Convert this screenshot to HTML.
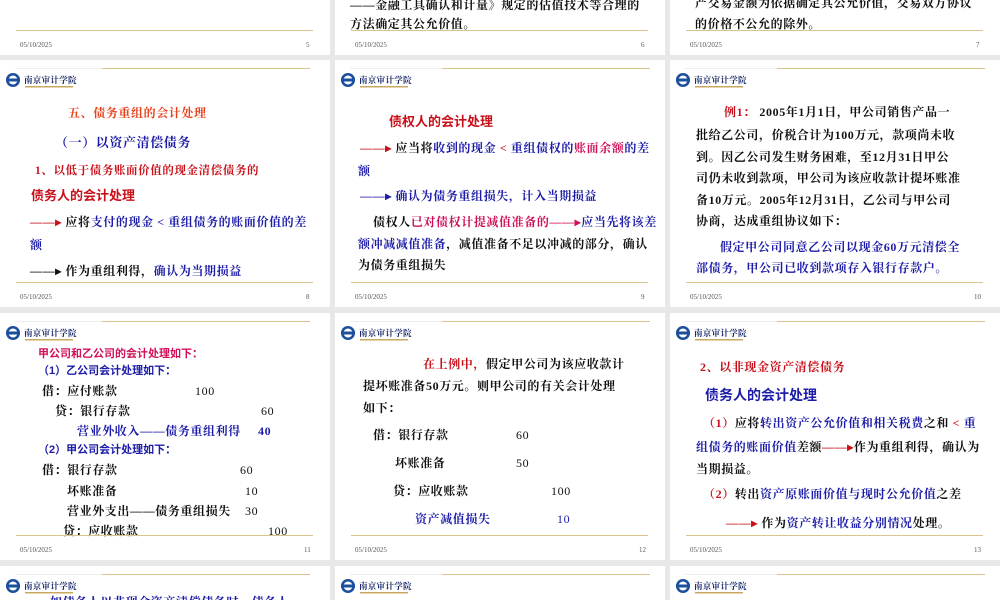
<!DOCTYPE html>
<html><head><meta charset="utf-8">
<style>
*{margin:0;padding:0;box-sizing:border-box}
html,body{width:1000px;height:600px;overflow:hidden;background:#e8e8e8;position:relative}
.s{position:absolute;background:#fff;width:330px;height:247px;overflow:hidden}
.t{position:absolute;white-space:nowrap;font-family:"Liberation Serif","Noto Serif CJK SC",serif;font-size:12px;font-weight:bold;color:#111;letter-spacing:0.6px;line-height:14px}
.h{font-family:"Liberation Sans","Noto Sans CJK SC",sans-serif;letter-spacing:0}
.gl{position:absolute;height:1px;background:#d8c48c}
.tl{position:absolute;height:1px;background:#eee}
.ft{position:absolute;font-family:"Liberation Serif",serif;font-size:7px;color:#555}
.r{color:#c8101a}.o{color:#e8401c}.b{color:#1c1ca8}.p{color:#d0105a}
.logo{position:absolute;left:5px;top:11px;width:75px;height:20px}
</style></head><body>

<!-- Row 1 -->
<div class="s" style="left:0;top:-192px">
<div class="gl" style="left:16px;top:222px;width:297px"></div>
<div class="ft" style="left:20px;top:233px">05/10/2025</div><div class="ft" style="left:306px;top:233px">5</div>
</div>
<div class="s" style="left:335px;top:-192px">
<div class="t" style="left:15px;top:190px">——金融工具确认和计量》规定的估值技术等合理的</div>
<div class="t" style="left:15px;top:209px">方法确定其公允价值。</div>
<div class="gl" style="left:16px;top:222px;width:297px"></div>
<div class="ft" style="left:20px;top:233px">05/10/2025</div><div class="ft" style="left:306px;top:233px">6</div>
</div>
<div class="s" style="left:670px;top:-192px">
<div class="t" style="left:25px;top:188px">产交易金额为依据确定其公允价值，交易双方协议</div>
<div class="t" style="left:25px;top:209px">的价格不公允的除外。</div>
<div class="gl" style="left:16px;top:222px;width:297px"></div>
<div class="ft" style="left:20px;top:233px">05/10/2025</div><div class="ft" style="left:306px;top:233px">7</div>
</div>

<!-- Row 2 -->
<div class="s" style="left:0;top:60px">
<div class="tl" style="left:15px;top:8px;width:88px"></div><div class="gl" style="left:102px;top:8px;width:208px"></div>
<svg class="logo" viewBox="0 0 75 20"><circle cx="8" cy="9" r="7" fill="#1c4f9c"/><circle cx="8" cy="9" r="4.5" fill="#fff"/><rect x="1" y="7.5" width="14" height="3" fill="#1c4f9c"/><text x="19" y="12" font-size="8.5" font-weight="bold" fill="#1a2a6a" font-family="Noto Serif CJK SC,serif" letter-spacing="0.3">南京审计学院</text><rect x="20" y="15" width="48" height="1.5" fill="#c8a860"/></svg>
<div class="t o" style="left:68px;top:46px">五、债务重组的会计处理</div>
<div class="t b" style="left:55px;top:76px;font-size:13px">（一）以资产清偿债务</div>
<div class="t r" style="left:35px;top:104px;font-size:11.5px">1、以低于债务账面价值的现金清偿债务的</div>
<div class="t h r" style="left:31px;top:129px;font-size:13px">债务人的会计处理</div>
<div class="t" style="left:30px;top:155px"><span class="r">——▸</span> 应将<span class="b">支付的现金 &lt; 重组债务的账面价值的差</span></div>
<div class="t b" style="left:30px;top:178px">额</div>
<div class="t" style="left:30px;top:204px">——▸ 作为重组利得，<span class="b">确认为当期损益</span></div>
<div class="gl" style="left:16px;top:222px;width:297px"></div>
<div class="ft" style="left:20px;top:233px">05/10/2025</div><div class="ft" style="left:306px;top:233px">8</div>
</div>

<div class="s" style="left:335px;top:60px">
<div class="tl" style="left:15px;top:8px;width:92px"></div><div class="gl" style="left:107px;top:8px;width:208px"></div>
<svg class="logo" viewBox="0 0 75 20"><circle cx="8" cy="9" r="7" fill="#1c4f9c"/><circle cx="8" cy="9" r="4.5" fill="#fff"/><rect x="1" y="7.5" width="14" height="3" fill="#1c4f9c"/><text x="19" y="12" font-size="8.5" font-weight="bold" fill="#1a2a6a" font-family="Noto Serif CJK SC,serif" letter-spacing="0.3">南京审计学院</text><rect x="20" y="15" width="48" height="1.5" fill="#c8a860"/></svg>
<div class="t h r" style="left:54px;top:55px;font-size:13px">债权人的会计处理</div>
<div class="t" style="left:25px;top:81px"><span class="r">——▸</span> 应当将<span class="b">收到的现金</span> <span class="r">&lt;</span> <span class="b">重组债权的</span><span class="p">账面余额</span><span class="b">的差</span></div>
<div class="t b" style="left:23px;top:104px">额</div>
<div class="t b" style="left:25px;top:129px">——▸ 确认为债务重组损失，计入当期损益</div>
<div class="t" style="left:38px;top:155px">债权人<span class="p">已对债权计提减值准备的——▸</span><span class="b">应当先将该差</span></div>
<div class="t" style="left:23px;top:177px"><span class="b">额冲减减值准备</span>，减值准备不足以冲减的部分，确认</div>
<div class="t" style="left:23px;top:198px">为债务重组损失</div>
<div class="gl" style="left:16px;top:222px;width:297px"></div>
<div class="ft" style="left:20px;top:233px">05/10/2025</div><div class="ft" style="left:306px;top:233px">9</div>
</div>

<div class="s" style="left:670px;top:60px">
<div class="tl" style="left:15px;top:8px;width:92px"></div><div class="gl" style="left:107px;top:8px;width:208px"></div>
<svg class="logo" viewBox="0 0 75 20"><circle cx="8" cy="9" r="7" fill="#1c4f9c"/><circle cx="8" cy="9" r="4.5" fill="#fff"/><rect x="1" y="7.5" width="14" height="3" fill="#1c4f9c"/><text x="19" y="12" font-size="8.5" font-weight="bold" fill="#1a2a6a" font-family="Noto Serif CJK SC,serif" letter-spacing="0.3">南京审计学院</text><rect x="20" y="15" width="48" height="1.5" fill="#c8a860"/></svg>
<div class="t" style="left:54px;top:45px"><span class="r">例1：</span> 2005年1月1日，甲公司销售产品一</div>
<div class="t" style="left:26px;top:68px">批给乙公司，价税合计为100万元，款项尚未收</div>
<div class="t" style="left:26px;top:90px">到。因乙公司发生财务困难，至12月31日甲公</div>
<div class="t" style="left:26px;top:111px">司仍未收到款项，甲公司为该应收款计提坏账准</div>
<div class="t" style="left:26px;top:133px">备10万元。2005年12月31日，乙公司与甲公司</div>
<div class="t" style="left:26px;top:154px">协商，达成重组协议如下：</div>
<div class="t b" style="left:50px;top:180px">假定甲公司同意乙公司以现金60万元清偿全</div>
<div class="t b" style="left:26px;top:201px">部债务，甲公司已收到款项存入银行存款户。</div>
<div class="gl" style="left:16px;top:222px;width:297px"></div>
<div class="ft" style="left:20px;top:233px">05/10/2025</div><div class="ft" style="left:304px;top:233px">10</div>
</div>

<!-- Row 3 -->
<div class="s" style="left:0;top:313px">
<div class="tl" style="left:15px;top:8px;width:88px"></div><div class="gl" style="left:102px;top:8px;width:208px"></div>
<svg class="logo" viewBox="0 0 75 20"><circle cx="8" cy="9" r="7" fill="#1c4f9c"/><circle cx="8" cy="9" r="4.5" fill="#fff"/><rect x="1" y="7.5" width="14" height="3" fill="#1c4f9c"/><text x="19" y="12" font-size="8.5" font-weight="bold" fill="#1a2a6a" font-family="Noto Serif CJK SC,serif" letter-spacing="0.3">南京审计学院</text><rect x="20" y="15" width="48" height="1.5" fill="#c8a860"/></svg>
<div class="t h p" style="left:38px;top:34px;font-size:11px">甲公司和乙公司的会计处理如下：</div>
<div class="t h b" style="left:38px;top:51px;font-size:11px">（1）乙公司会计处理如下：</div>
<div class="t" style="left:42px;top:71px">借：应付账款</div><div class="t" style="left:195px;top:71px;font-weight:normal">100</div>
<div class="t" style="left:55px;top:91px">贷：银行存款</div><div class="t" style="left:261px;top:91px;font-weight:normal">60</div>
<div class="t b" style="left:77px;top:111px">营业外收入——债务重组利得</div><div class="t b" style="left:258px;top:111px">40</div>
<div class="t h b" style="left:38px;top:130px;font-size:11px">（2）甲公司会计处理如下：</div>
<div class="t" style="left:42px;top:150px">借：银行存款</div><div class="t" style="left:240px;top:150px;font-weight:normal">60</div>
<div class="t" style="left:67px;top:171px">坏账准备</div><div class="t" style="left:245px;top:171px;font-weight:normal">10</div>
<div class="t" style="left:67px;top:191px">营业外支出——债务重组损失</div><div class="t" style="left:245px;top:191px;font-weight:normal">30</div>
<div class="t" style="left:63px;top:211px">贷：应收账款</div><div class="t" style="left:268px;top:211px;font-weight:normal">100</div>
<div class="gl" style="left:16px;top:222px;width:297px"></div>
<div class="ft" style="left:20px;top:233px">05/10/2025</div><div class="ft" style="left:304px;top:233px">11</div>
</div>

<div class="s" style="left:335px;top:313px">
<div class="tl" style="left:15px;top:8px;width:92px"></div><div class="gl" style="left:107px;top:8px;width:208px"></div>
<svg class="logo" viewBox="0 0 75 20"><circle cx="8" cy="9" r="7" fill="#1c4f9c"/><circle cx="8" cy="9" r="4.5" fill="#fff"/><rect x="1" y="7.5" width="14" height="3" fill="#1c4f9c"/><text x="19" y="12" font-size="8.5" font-weight="bold" fill="#1a2a6a" font-family="Noto Serif CJK SC,serif" letter-spacing="0.3">南京审计学院</text><rect x="20" y="15" width="48" height="1.5" fill="#c8a860"/></svg>
<div class="t" style="left:88px;top:44px"><span class="r">在上例中，</span>假定甲公司为该应收款计</div>
<div class="t" style="left:28px;top:66px">提坏账准备50万元。则甲公司的有关会计处理</div>
<div class="t" style="left:28px;top:88px">如下：</div>
<div class="t" style="left:38px;top:115px">借：银行存款</div><div class="t" style="left:181px;top:115px;font-weight:normal">60</div>
<div class="t" style="left:60px;top:143px">坏账准备</div><div class="t" style="left:181px;top:143px;font-weight:normal">50</div>
<div class="t" style="left:58px;top:171px">贷：应收账款</div><div class="t" style="left:216px;top:171px;font-weight:normal">100</div>
<div class="t b" style="left:80px;top:199px">资产减值损失</div><div class="t b" style="left:222px;top:199px;font-weight:normal">10</div>
<div class="gl" style="left:16px;top:222px;width:297px"></div>
<div class="ft" style="left:20px;top:233px">05/10/2025</div><div class="ft" style="left:304px;top:233px">12</div>
</div>

<div class="s" style="left:670px;top:313px">
<div class="tl" style="left:15px;top:8px;width:92px"></div><div class="gl" style="left:107px;top:8px;width:208px"></div>
<svg class="logo" viewBox="0 0 75 20"><circle cx="8" cy="9" r="7" fill="#1c4f9c"/><circle cx="8" cy="9" r="4.5" fill="#fff"/><rect x="1" y="7.5" width="14" height="3" fill="#1c4f9c"/><text x="19" y="12" font-size="8.5" font-weight="bold" fill="#1a2a6a" font-family="Noto Serif CJK SC,serif" letter-spacing="0.3">南京审计学院</text><rect x="20" y="15" width="48" height="1.5" fill="#c8a860"/></svg>
<div class="t r" style="left:30px;top:47px">2、以非现金资产清偿债务</div>
<div class="t h b" style="left:35px;top:75px;font-size:14px">债务人的会计处理</div>
<div class="t" style="left:33px;top:103px"><span class="r">（1）</span>应将<span class="b">转出资产公允价值和相关税费</span>之和 <span class="r">&lt;</span> <span class="b">重</span></div>
<div class="t" style="left:26px;top:127px"><span class="b">组债务的账面价值</span>差额<span class="r">——▸</span>作为重组利得，确认为</div>
<div class="t" style="left:26px;top:149px">当期损益。</div>
<div class="t" style="left:33px;top:174px"><span class="r">（2）</span>转出<span class="b">资产原账面价值与现时公允价值</span>之差</div>
<div class="t" style="left:56px;top:203px"><span class="r">——▸</span> 作为<span class="b">资产转让收益分别情况</span>处理。</div>
<div class="gl" style="left:16px;top:222px;width:297px"></div>
<div class="ft" style="left:20px;top:233px">05/10/2025</div><div class="ft" style="left:304px;top:233px">13</div>
</div>

<!-- Row 4 -->
<div class="s" style="left:0;top:566px;height:34px">
<div class="tl" style="left:15px;top:8px;width:88px"></div><div class="gl" style="left:102px;top:8px;width:208px"></div>
<svg class="logo" viewBox="0 0 75 20"><circle cx="8" cy="9" r="7" fill="#1c4f9c"/><circle cx="8" cy="9" r="4.5" fill="#fff"/><rect x="1" y="7.5" width="14" height="3" fill="#1c4f9c"/><text x="19" y="12" font-size="8.5" font-weight="bold" fill="#1a2a6a" font-family="Noto Serif CJK SC,serif" letter-spacing="0.3">南京审计学院</text><rect x="20" y="15" width="48" height="1.5" fill="#c8a860"/></svg>
<div class="t b" style="left:50px;top:29px">如债务人以非现金资产清偿债务时，债务人</div>
</div>
<div class="s" style="left:335px;top:566px;height:34px">
<div class="tl" style="left:15px;top:8px;width:92px"></div><div class="gl" style="left:107px;top:8px;width:208px"></div>
<svg class="logo" viewBox="0 0 75 20"><circle cx="8" cy="9" r="7" fill="#1c4f9c"/><circle cx="8" cy="9" r="4.5" fill="#fff"/><rect x="1" y="7.5" width="14" height="3" fill="#1c4f9c"/><text x="19" y="12" font-size="8.5" font-weight="bold" fill="#1a2a6a" font-family="Noto Serif CJK SC,serif" letter-spacing="0.3">南京审计学院</text><rect x="20" y="15" width="48" height="1.5" fill="#c8a860"/></svg>
</div>
<div class="s" style="left:670px;top:566px;height:34px">
<div class="tl" style="left:15px;top:8px;width:92px"></div><div class="gl" style="left:107px;top:8px;width:208px"></div>
<svg class="logo" viewBox="0 0 75 20"><circle cx="8" cy="9" r="7" fill="#1c4f9c"/><circle cx="8" cy="9" r="4.5" fill="#fff"/><rect x="1" y="7.5" width="14" height="3" fill="#1c4f9c"/><text x="19" y="12" font-size="8.5" font-weight="bold" fill="#1a2a6a" font-family="Noto Serif CJK SC,serif" letter-spacing="0.3">南京审计学院</text><rect x="20" y="15" width="48" height="1.5" fill="#c8a860"/></svg>
</div>
</body></html>
